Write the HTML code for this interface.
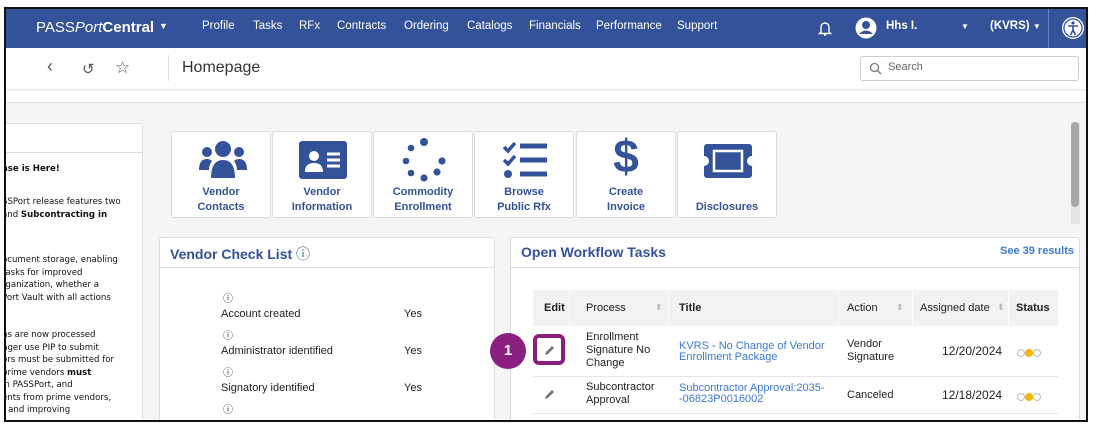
<!DOCTYPE html>
<html><head><meta charset="utf-8"><style>
*{box-sizing:border-box;margin:0;padding:0}
body{width:1097px;height:429px;background:#fff;position:relative;overflow:hidden;font-family:"Liberation Sans",sans-serif}
.a{position:absolute}
#frame{left:4px;top:7px;width:1084px;height:415px;border:2px solid #111;overflow:hidden;background:#f5f5f5}
.nav{left:0;top:0;width:1080px;height:39px;background:#34529a;color:#fff}
.nav span{position:absolute;top:11px;font-size:11.5px}
.tile{top:122px;width:100px;height:87px;background:#fff;border:1px solid #ddd;border-radius:3px;text-align:center;color:#34529a;font-size:11px;font-weight:bold;line-height:15px}
.tile .lb{position:absolute;left:0;right:0;bottom:2px}
.panel{background:#fff;border:1px solid #ddd;border-radius:3px}
.sm{font-family:"DejaVu Sans",sans-serif;font-size:8.6px;color:#111;line-height:12.5px;white-space:nowrap}
.th{font-size:11px;font-weight:bold;color:#222}
.td{font-size:11px;color:#222;line-height:13px}
.lk{font-size:11px;color:#3a7bd5;line-height:11px}
.ic{font-size:10px;color:#222}
</style></head><body>
<div id="frame" class="a">
 <div class="a nav">
  <span style="left:30px;top:10px;font-size:15px">PASS<i>Port</i><b>Central</b></span>
  <span style="left:153px;top:12px;font-size:9px">▼</span>
  <span style="left:196px">Profile</span><span style="left:247px">Tasks</span><span style="left:293px">RFx</span>
  <span style="left:331px">Contracts</span><span style="left:398px">Ordering</span><span style="left:461px">Catalogs</span>
  <span style="left:523px">Financials</span><span style="left:590px">Performance</span><span style="left:671px">Support</span>
  <svg class="a" style="left:812px;top:11px" width="14" height="17" viewBox="0 0 14 17"><path d="M3 12V7a4 4 0 0 1 8 0v5l1.5 1.5h-11z M6 15h2" stroke="#fff" stroke-width="1.4" fill="none"/></svg>
  <svg class="a" style="left:849px;top:8px" width="22" height="22" viewBox="0 0 22 22"><circle cx="11" cy="11" r="10.5" fill="#fff"/><circle cx="11" cy="8" r="4" fill="#34529a"/><path d="M4 17q7-7 14 0" fill="#34529a"/></svg>
  <span style="left:880px;font-weight:bold">Hhs I.</span>
  <span style="left:955px;top:13px;font-size:8px">▼</span>
  <span style="left:984px;font-weight:bold">(KVRS) <small style="font-size:8px">▼</small></span>
  <div class="a" style="left:1042px;top:0;width:1px;height:39px;background:#6a80b8"></div>
  <svg class="a" style="left:1055px;top:7px" width="24" height="24" viewBox="0 0 24 24"><circle cx="12" cy="12" r="11" fill="#fff"/><circle cx="12" cy="12" r="9" fill="none" stroke="#34529a" stroke-width="1.3"/><circle cx="12" cy="7" r="1.6" fill="#34529a"/><path d="M7 10h10M12 10v4l-2.5 5M12 14l2.5 5" stroke="#34529a" stroke-width="1.6" fill="none"/></svg>
 </div>
 <div class="a" style="left:0;top:39px;width:1080px;height:42px;background:#fff;border-bottom:1px solid #e6e6e6"></div>
 <div class="a" style="left:0;top:82px;width:1080px;height:12px;background:#fff;border-bottom:1px solid #e0e0e0"></div>
 <span class="a" style="left:41px;top:47px;font-size:18px;color:#555">‹</span>
 <span class="a" style="left:76px;top:51px;font-size:15px;color:#555">↺</span>
 <span class="a" style="left:109px;top:49px;font-size:17px;color:#555">☆</span>
 <div class="a" style="left:162px;top:46px;width:1px;height:26px;background:#ddd"></div>
 <span class="a" style="left:176px;top:50px;font-size:16px;color:#333">Homepage</span>
 <div class="a" style="left:854px;top:47px;width:219px;height:25px;border:1px solid #ccc;border-radius:3px;background:#fff"></div>
 <svg class="a" style="left:863px;top:53px" width="13" height="13" viewBox="0 0 13 13"><circle cx="5.5" cy="5.5" r="4" fill="none" stroke="#777" stroke-width="1.3"/><path d="M8.5 8.5l3.5 3.5" stroke="#777" stroke-width="1.3"/></svg>
 <span class="a" style="left:882px;top:52px;font-size:11px;color:#666">Search</span>

 <div class="a" style="left:1065px;top:113px;width:9px;height:102px;background:#e5e5e5"></div>
 <div class="a" style="left:1065px;top:113px;width:8px;height:85px;background:#a8a8a8;border-radius:4px"></div>

 <div class="a panel" style="left:-5px;top:114px;width:142px;height:320px">
  <div class="a" style="left:0;top:28px;width:140px;height:1px;background:#ddd"></div>
  <div class="a sm" style="left:0;top:39px"><b>ase is Here!</b></div>
  <div class="a sm" style="left:0;top:72px">SSPort release features two<br>and <b>Subcontracting in</b></div>
  <div class="a sm" style="left:0;top:130px">ocument storage, enabling<br>tasks for improved<br>rganization, whether a<br>Port Vault with all actions</div>
  <div class="a sm" style="left:0;top:205px">ns are now processed<br>nger use PIP to submit<br>ors must be submitted for<br>prime vendors <b>must</b><br> in PASSPort, and<br>ents from prime vendors,<br>t and improving</div>
 </div>

 <div class="a tile" style="left:165px">
  <svg class="a" style="left:27px;top:8px" width="48" height="40" viewBox="0 0 48 40"><circle cx="24" cy="9" r="8" fill="#34529a"/><circle cx="8" cy="12" r="5" fill="#34529a"/><circle cx="40" cy="12" r="5" fill="#34529a"/><path d="M12 38q0-18 12-18t12 18z" fill="#34529a"/><path d="M0 30q0-11 8-11q3 0 5 2q-3 4-3 9z M48 30q0-11-8-11q-3 0-5 2q3 4 3 9z" fill="#34529a"/></svg>
  <div class="lb">Vendor<br>Contacts</div></div>
 <div class="tile a" style="left:266px">
  <svg class="a" style="left:26px;top:9px" width="48" height="40" viewBox="0 0 48 40"><rect width="48" height="38" rx="3" fill="#34529a"/><circle cx="15" cy="15" r="5" fill="#fff"/><path d="M6 31q0-9 9-9t9 9z" fill="#fff"/><path d="M28 13h13M28 19h13M28 25h13" stroke="#fff" stroke-width="3"/></svg>
  <div class="lb">Vendor<br>Information</div></div>
 <div class="tile a" style="left:367px">
  <svg class="a" style="left:27px;top:6px" width="46" height="44" viewBox="0 0 46 44"><g fill="#34529a"><circle cx="23" cy="4" r="4"/><circle cx="10" cy="10" r="3.3"/><circle cx="5" cy="23" r="3.3"/><circle cx="10" cy="35" r="3.3"/><circle cx="23" cy="40" r="3.6"/><circle cx="36" cy="34" r="3.6"/><circle cx="41" cy="23" r="3.6"/></g></svg>
  <div class="lb">Commodity<br>Enrollment</div></div>
 <div class="tile a" style="left:468px">
  <svg class="a" style="left:28px;top:9px" width="46" height="38" viewBox="0 0 46 38"><path d="M1 6l4 4 7-8M1 19l4 4 7-8" stroke="#34529a" stroke-width="3.5" fill="none"/><circle cx="5" cy="33" r="4" fill="#34529a"/><path d="M17 5h27M17 19h27M17 33h27" stroke="#34529a" stroke-width="5"/></svg>
  <div class="lb">Browse<br>Public Rfx</div></div>
 <div class="tile a" style="left:570px">
  <div class="a" style="left:0;right:0;top:-2px;font-size:46px;font-weight:bold;color:#34529a;line-height:52px">$</div>
  <div class="lb">Create<br>Invoice</div></div>
 <div class="tile a" style="left:671px">
  <svg class="a" style="left:26px;top:12px" width="48" height="34" viewBox="0 0 48 34"><path d="M3 0h42a3 3 0 0 1 3 3v9a5 5 0 0 0 0 10v9a3 3 0 0 1-3 3H3a3 3 0 0 1-3-3v-9a5 5 0 0 0 0-10V3a3 3 0 0 1 3-3z" fill="#34529a"/><rect x="10" y="7" width="28" height="20" fill="none" stroke="#fff" stroke-width="2.5"/></svg>
  <div class="lb">Disclosures</div></div>

 <div class="a panel" style="left:153px;top:228px;width:336px;height:200px">
  <div class="a" style="left:10px;top:6px;font-size:14px;font-weight:bold;color:#34529a">Vendor Check List <span style="font-weight:normal">ⓘ</span></div>
  <div class="a" style="left:0;top:29px;width:334px;height:1px;background:#ddd"></div>
  <div class="a ic" style="left:63px;top:52px">ⓘ</div><div class="a td" style="left:61px;top:70px">Account created</div><div class="a td" style="left:244px;top:70px">Yes</div>
  <div class="a ic" style="left:63px;top:89px">ⓘ</div><div class="a td" style="left:61px;top:107px">Administrator identified</div><div class="a td" style="left:244px;top:107px">Yes</div>
  <div class="a ic" style="left:63px;top:126px">ⓘ</div><div class="a td" style="left:61px;top:144px">Signatory identified</div><div class="a td" style="left:244px;top:144px">Yes</div>
  <div class="a ic" style="left:63px;top:163px">ⓘ</div>
 </div>

 <div class="a panel" style="left:504px;top:228px;width:570px;height:200px">
  <div class="a" style="left:10px;top:6px;font-size:14px;font-weight:bold;color:#34529a">Open Workflow Tasks</div>
  <div class="a" style="left:489px;top:7px;font-size:11px;font-weight:bold;color:#3a7bd5">See 39 results</div>
  <div class="a" style="left:0;top:29px;width:568px;height:1px;background:#ddd"></div>
  <div class="a" style="left:22px;top:52px;width:525px;height:36px;background:#f2f2f2"></div>
  <div class="a" style="left:58px;top:52px;width:1px;height:36px;background:#fff"></div>
  <div class="a" style="left:157px;top:52px;width:1px;height:36px;background:#fff"></div>
  <div class="a" style="left:327px;top:52px;width:1px;height:36px;background:#fff"></div>
  <div class="a" style="left:401px;top:52px;width:1px;height:36px;background:#fff"></div>
  <div class="a" style="left:497px;top:52px;width:1px;height:36px;background:#fff"></div>
  <div class="a th" style="left:33px;top:64px">Edit</div>
  <div class="a th" style="left:75px;top:64px;font-weight:normal">Process</div><div class="a" style="left:144px;top:64px;font-size:9px;color:#bbb">⬍</div>
  <div class="a th" style="left:168px;top:64px">Title</div>
  <div class="a th" style="left:336px;top:64px;font-weight:normal">Action</div><div class="a" style="left:385px;top:64px;font-size:9px;color:#bbb">⬍</div>
  <div class="a th" style="left:409px;top:64px;font-weight:normal">Assigned date</div><div class="a" style="left:486px;top:64px;font-size:9px;color:#bbb">⬍</div>
  <div class="a th" style="left:505px;top:64px">Status</div>
  <div class="a" style="left:22px;top:138px;width:525px;height:1px;background:#e5e5e5"></div>
  <div class="a" style="left:22px;top:175px;width:525px;height:1px;background:#e5e5e5"></div>
  <div class="a td" style="left:75px;top:93px">Enrollment<br>Signature No<br>Change</div>
  <div class="a lk" style="left:168px;top:103px">KVRS - No Change of Vendor<br>Enrollment Package</div>
  <div class="a td" style="left:336px;top:100px">Vendor<br>Signature</div>
  <div class="a td" style="left:431px;top:107px;font-size:12px">12/20/2024</div>
  <div class="a td" style="left:75px;top:143px">Subcontractor<br>Approval</div>
  <div class="a lk" style="left:168px;top:145px">Subcontractor Approval:2035-<br>-06823P0016002</div>
  <div class="a td" style="left:336px;top:151px">Canceled</div>
  <div class="a td" style="left:431px;top:151px;font-size:12px">12/18/2024</div>
  <div class="a" style="left:506px;top:111px;font-size:0"><span style="display:inline-block;width:8px;height:8px;border:1px solid #bbb;border-radius:50%"></span><span style="display:inline-block;width:8px;height:8px;background:#f5b800;border-radius:50%"></span><span style="display:inline-block;width:8px;height:8px;border:1px solid #bbb;border-radius:50%"></span></div>
  <div class="a" style="left:506px;top:155px;font-size:0"><span style="display:inline-block;width:8px;height:8px;border:1px solid #bbb;border-radius:50%"></span><span style="display:inline-block;width:8px;height:8px;background:#f5b800;border-radius:50%"></span><span style="display:inline-block;width:8px;height:8px;border:1px solid #bbb;border-radius:50%"></span></div>
  <div class="a" style="left:22px;top:96px;width:32px;height:31px;border:4px solid #8a1f7f;border-radius:6px;background:#fff"></div>
  <svg class="a" style="left:33px;top:107px" width="11" height="11" viewBox="0 0 11 11"><path d="M1 10l1-3 6-6 2 2-6 6z" fill="#777"/></svg>
  <svg class="a" style="left:33px;top:151px" width="11" height="11" viewBox="0 0 11 11"><path d="M1 10l1-3 6-6 2 2-6 6z" fill="#777"/></svg>
 </div>
 <div class="a" style="left:484px;top:324px;width:36px;height:36px;border-radius:50%;background:#8a1f7f;color:#fff;font-weight:bold;font-size:15px;text-align:center;line-height:36px">1</div>
</div>
</body></html>
